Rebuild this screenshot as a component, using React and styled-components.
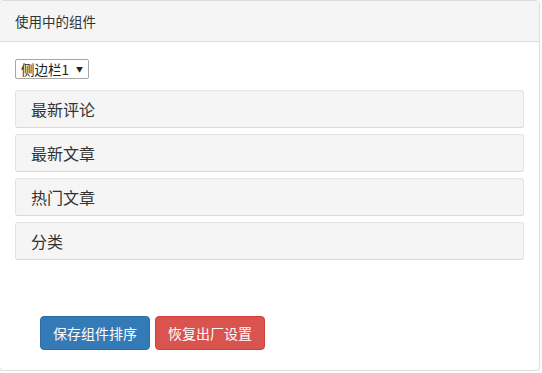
import React from 'react';
import styled, { createGlobalStyle } from 'styled-components';

const GlobalStyle = createGlobalStyle`
	* {
		box-sizing: border-box;
	}
	body {
		margin: 0;
		background: #fff;
		font-family: "Noto Sans CJK SC", "Liberation Sans", sans-serif;
		font-size: 14px;
		color: #333;
	}
`;

const Panel = styled.div`
	width: 541px;
	height: 371px;
	margin-left: -1px;
	border: 1px solid #ddd;
	border-radius: 4px;
	background: #fff;
	display: flex;
	flex-direction: column;
	box-shadow: 0 1px 1px rgba(0, 0, 0, .05);
`;

Panel.Heading = styled.div`
	padding: 10px 15px;
	height: 41px;
	line-height: 20px;
	font-size: 13.5px;
	background: #f5f5f5;
	border-bottom: 1px solid #ddd;
	border-radius: 3px 3px 0 0;
`;

Panel.Body = styled.div`
	padding: 17px 15px 20px;
	display: flex;
	flex-direction: column;
	flex: 1;
`;

const SelectWrap = styled.div`
	position: relative;
	display: flex;
	align-self: flex-start;
	margin-bottom: 11px;
`;

const Select = styled.select`
	appearance: none;
	display: block;
	height: 20px;
	width: 74px;
	margin: 0;
	padding: 0 0 0 5px;
	border: 1px solid #a6a6a6;
	border-radius: 2px;
	background: #fff;
	font-family: inherit;
	font-size: 13.5px;
	line-height: 18px;
	color: #222;
`;

SelectWrap.Arrow = styled.span`
	position: absolute;
	right: 6px;
	top: 3px;
	font-size: 7px;
	line-height: 14px;
	color: #222;
	pointer-events: none;
`;

const WidgetList = styled.div`
	display: flex;
	flex-direction: column;
	gap: 6px;
`;

const Widget = styled.div`
	height: 38px;
	padding: 0 15px;
	display: flex;
	align-items: center;
	font-size: 16px;
	color: #333;
	background: #f5f5f5;
	border: 1px solid #e3e3e3;
	border-bottom-color: #d8d8d8;
	border-radius: 3px;
`;

const Actions = styled.div`
	margin-top: auto;
	padding-left: 25px;
	display: flex;
	gap: 5px;
`;

const Button = styled.button`
	height: 34px;
	padding: 6px 12px;
	font-family: inherit;
	font-size: 14px;
	line-height: 20px;
	color: #fff;
	border-radius: 4px;
	border: 1px solid ${props => props.danger ? '#d43f3a' : '#2e6da4'};
	background: ${props => props.danger ? '#d9534f' : '#337ab7'};
	cursor: pointer;
`;

const widgets = ['最新评论', '最新文章', '热门文章', '分类'];

export default function App() {
	return (
		<>
			<GlobalStyle />
			<Panel>
				<Panel.Heading>使用中的组件</Panel.Heading>
				<Panel.Body>
					<SelectWrap>
						<Select defaultValue="1">
							<option value="1">侧边栏1</option>
						</Select>
						<SelectWrap.Arrow>▼</SelectWrap.Arrow>
					</SelectWrap>
					<WidgetList>
						{widgets.map(name => <Widget key={name}>{name}</Widget>)}
					</WidgetList>
					<Actions>
						<Button>保存组件排序</Button>
						<Button danger>恢复出厂设置</Button>
					</Actions>
				</Panel.Body>
			</Panel>
		</>
	);
}
